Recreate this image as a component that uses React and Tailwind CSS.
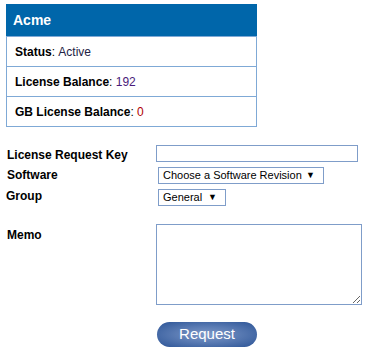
import React from 'react';

const font = { fontFamily: '"Liberation Sans", Arial, sans-serif' };

function InfoRow({ label, value, valueClass }) {
  return (
    <div className="border border-[#7fa9d6] -mt-px h-[31px] flex items-center px-[8px] text-[12px] text-black">
      <span className="font-bold">{label}</span>
      <span>:&nbsp;</span>
      <span className={valueClass}>{value}</span>
    </div>
  );
}

function FakeSelect({ text, width }) {
  return (
    <div className={`h-[17px] border border-[#7f9dc9] bg-white flex items-center justify-between pl-[4px] pr-[8px] text-[11px] font-normal text-black whitespace-nowrap ${width}`}>
      <span>{text}</span>
      <span className="text-[9px]">▼</span>
    </div>
  );
}

export default function App() {
  return (
    <div className="w-[370px] h-[353px] bg-white" style={font}>
      {/* account summary */}
      <div className="ml-[6px] mt-[4px] w-[251px]">
        <div className="bg-[#0066aa] h-[32px] flex items-center px-[7px] text-white font-bold text-[14px]">
          Acme
        </div>
        <div className="pt-px">
          <InfoRow label="Status" value="Active" valueClass="text-[#222244]" />
          <InfoRow label="License Balance" value="192" valueClass="text-[#4a1a7a]" />
          <InfoRow label="GB License Balance" value="0" valueClass="text-[#b00000]" />
        </div>
      </div>

      {/* request form */}
      <div className="mt-[18px] text-[12px] font-bold text-black">
        <div className="flex h-[22px]">
          <div className="w-[156px] pl-[7px] pt-px">License Request Key</div>
          <div className="w-[202px] h-[17px] border border-[#7f9dc9] bg-white"></div>
        </div>
        <div className="flex h-[22px]">
          <div className="w-[158px] pl-[7px] -mt-[1px]">Software</div>
          <FakeSelect text="Choose a Software Revision" width="w-[166px]" />
        </div>
        <div className="flex h-[35px]">
          <div className="w-[158px] pl-[6px] -mt-[2px]">Group</div>
          <FakeSelect text="General" width="w-[68px]" />
        </div>
        <div className="flex">
          <div className="w-[156px] pl-[7px] pt-[2px]">Memo</div>
          <textarea className="w-[206px] h-[81px] border border-[#7f9dc9] bg-white block"></textarea>
        </div>
        <div className="pl-[157px] mt-[17px]">
          <button
            className="w-[100px] h-[25px] rounded-full text-white font-normal text-[15px] flex items-center justify-center"
            style={{ background: 'radial-gradient(ellipse at center, #7d98c8 0%, #5a7bb3 45%, #2c5496 100%)' }}
          >
            Request
          </button>
        </div>
      </div>
    </div>
  );
}
